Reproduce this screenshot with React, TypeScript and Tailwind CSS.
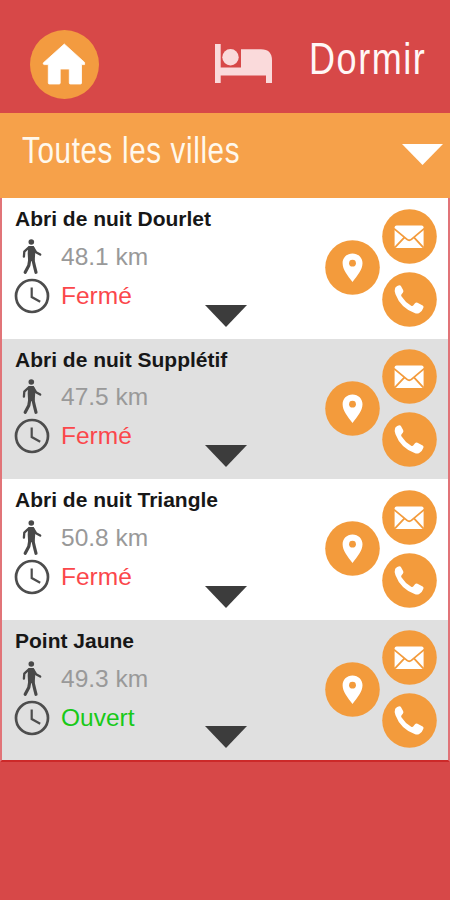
import React from "react";

type Place = { name: string; distance: string; open: boolean };

const places: Place[] = [
  { name: "Abri de nuit Dourlet", distance: "48.1 km", open: false },
  { name: "Abri de nuit Supplétif", distance: "47.5 km", open: false },
  { name: "Abri de nuit Triangle", distance: "50.8 km", open: false },
  { name: "Point Jaune", distance: "49.3 km", open: true },
];

function HomeIcon() {
  return (
    <svg viewBox="0 0 69 69" className="size-[69px] shrink-0">
      <circle cx="34.5" cy="34.5" r="34.5" fill="#f39b40" />
      <path
        d="M34.3 14 54.6 32.4V34.6H51.5V53Q51.5 54 50.5 54H40.3Q39.3 54 39.3 53V39H30.2V53Q30.2 54 29.2 54H19.3Q18.3 54 18.3 53V34.6H14.2Q13.2 34.6 13.2 33Z"
        fill="#fff"
        stroke="#fff"
        strokeWidth="0.8"
        strokeLinejoin="round"
      />
    </svg>
  );
}

function BedIcon() {
  return (
    <svg viewBox="0 0 58 40" className="h-10 w-[58px] shrink-0" fill="#fadadb">
      <path d="M0 0H5.7V23.5H26V5.3H46Q57 5.3 57 16.5V39H51V31.5H5.7V39H0Z" />
      <circle cx="15.5" cy="13.3" r="8.2" />
    </svg>
  );
}

function WalkIcon() {
  return (
    <svg viewBox="0 0 36 36" className="size-9" fill="none" stroke="#494949" strokeLinecap="round" strokeLinejoin="round">
      <circle cx="17.3" cy="3" r="2.8" fill="#494949" stroke="none" />
      <path d="M14.8 7.8h4.6l1.2 5.4-.6 8-5.2.4-.4-7z" fill="#494949" strokeWidth="1.4" />
      <path d="M14.6 8.6 10.3 12.6 9.9 17.6M19.4 8.8 22 13.2 26.2 15.6" strokeWidth="2.3" />
      <path d="M15.8 20.5 14.8 26.5 11.2 33.3M18.9 20.5 20.4 27 22 33.3" strokeWidth="3.2" />
    </svg>
  );
}

function ClockIcon() {
  return (
    <svg viewBox="0 0 36 36" className="size-9" fill="none" stroke="#4d4d4d">
      <circle cx="18" cy="18" r="16" strokeWidth="2.7" />
      <path d="M17.7 9.4V19L26.2 23.8" strokeWidth="2.2" />
    </svg>
  );
}

function PinButton() {
  return (
    <svg viewBox="0 0 55 55" className="size-[55px]">
      <circle cx="27.5" cy="27.5" r="27.3" fill="#f39b3c" />
      <path d="M27.5 13.5C21.7 13.5 17.6 17.8 17.6 23.2C17.6 29.5 22.5 35.3 27.5 42C32.5 35.3 37.5 29.5 37.5 23.2C37.5 17.8 33.3 13.5 27.5 13.5Z" fill="#fff" />
      <circle cx="27.5" cy="23.2" r="3.4" fill="#f39b3c" />
    </svg>
  );
}

function MailButton() {
  return (
    <svg viewBox="0 0 55 55" className="size-[55px]">
      <circle cx="27.5" cy="27.5" r="27.3" fill="#f39b3c" />
      <rect x="12.6" y="16.4" width="29" height="22.6" rx="2" fill="#fff" />
      <path d="M12 19.6 25 30.4Q27.2 32.2 29.4 30.4L42.2 19.6M13 38.4 22.2 28.6M41.2 38.4 32.2 28.6" fill="none" stroke="#f39b3c" strokeWidth="1.8" />
    </svg>
  );
}

function PhoneButton() {
  return (
    <svg viewBox="0 0 55 55" className="size-[55px]">
      <circle cx="27.5" cy="27.5" r="27.3" fill="#f39b3c" />
      <path
        d="M13.2 15.8Q15 13.4 17.3 13.2Q18.6 13.2 19.2 14.5L21.2 18.2Q21.8 19.5 20.8 20.7L19.4 22.4Q18.9 23.2 19.4 24.2Q23.2 30.2 29.2 33.7Q30.5 34.3 31.4 33.3L33 31.2Q34.1 30 35.5 30.7L40.7 33.4Q42 34.2 41.4 35.8Q40.3 39.3 37.2 41Q35.2 42 32.6 41Q18.6 35.8 13.5 22.2Q12.1 18.3 13.2 15.8Z"
        fill="#fff"
      />
    </svg>
  );
}

function PlaceRow({ place, shaded }: { place: Place; shaded: boolean }) {
  return (
    <li className={`grid h-[140.6px] grid-cols-[200px_46px_1fr] pl-3 pr-[11px] ${shaded ? "bg-[#e0e0e0]" : "bg-white"}`}>
      <div className="pt-[7px]">
        <h2 className="h-[32.4px] whitespace-nowrap text-[21px] leading-[28px] font-bold text-[#171717] pl-px">{place.name}</h2>
        <div className="flex h-[39px] items-center text-[24.5px] leading-[38px] text-[#999]">
          <span className="w-[47px]"><WalkIcon /></span>
          <span className="whitespace-nowrap">{place.distance}</span>
        </div>
        <div className="flex h-[39px] items-center text-[24.5px] leading-[38px]">
          <span className="w-[47px]"><ClockIcon /></span>
          <span className={place.open ? "text-[#18c918]" : "text-[#fb474b]"}>{place.open ? "Ouvert" : "Fermé"}</span>
        </div>
      </div>
      <svg viewBox="0 0 42 22" className="mb-3 ml-[-9.5px] h-[22px] w-[42px] self-end" fill="#3c3c3c">
        <path d="M0 0H42L21 22Z" />
      </svg>
      <div className="flex items-start justify-end gap-[2px] pt-[10.5px]">
        <div className="pt-[31.5px]"><PinButton /></div>
        <div className="flex flex-col gap-2">
          <MailButton />
          <PhoneButton />
        </div>
      </div>
    </li>
  );
}

export default function App() {
  return (
    <main className="h-[900px] w-[450px] overflow-hidden bg-[#d74848] font-['Liberation_Sans',Arial,sans-serif]">
      <header className="flex h-[113px] items-start">
        <div className="ml-[29.5px] mt-[29.5px]"><HomeIcon /></div>
        <div className="ml-[116.5px] mt-[44px]"><BedIcon /></div>
        <h1 className="ml-[35.5px] mt-[33px] origin-left scale-x-[0.81] whitespace-nowrap text-[44.5px] leading-[51px] tracking-[1.9px] text-[#fff7f6]">Dormir</h1>
      </header>
      <div className="flex h-[85px] items-start justify-between bg-[#f6a14a] pl-[22px] pr-[7.5px]">
        <span className="mt-[17px] origin-left scale-x-[0.8] whitespace-nowrap text-[37px] leading-[42px] tracking-[0.8px] text-[#fff8ec]">Toutes les villes</span>
        <svg viewBox="0 0 41 21" className="mt-[31px] h-[21px] w-[41px]" fill="#fff">
          <path d="M0 0H41L20.5 21Z" />
        </svg>
      </div>
      <ul className="border-x-2 border-b-2 border-l-[#e17478] border-r-[#e17478] border-b-[#cc2929]">
        {places.map((place, index) => (
          <PlaceRow key={place.name} place={place} shaded={index % 2 === 1} />
        ))}
      </ul>
    </main>
  );
}
